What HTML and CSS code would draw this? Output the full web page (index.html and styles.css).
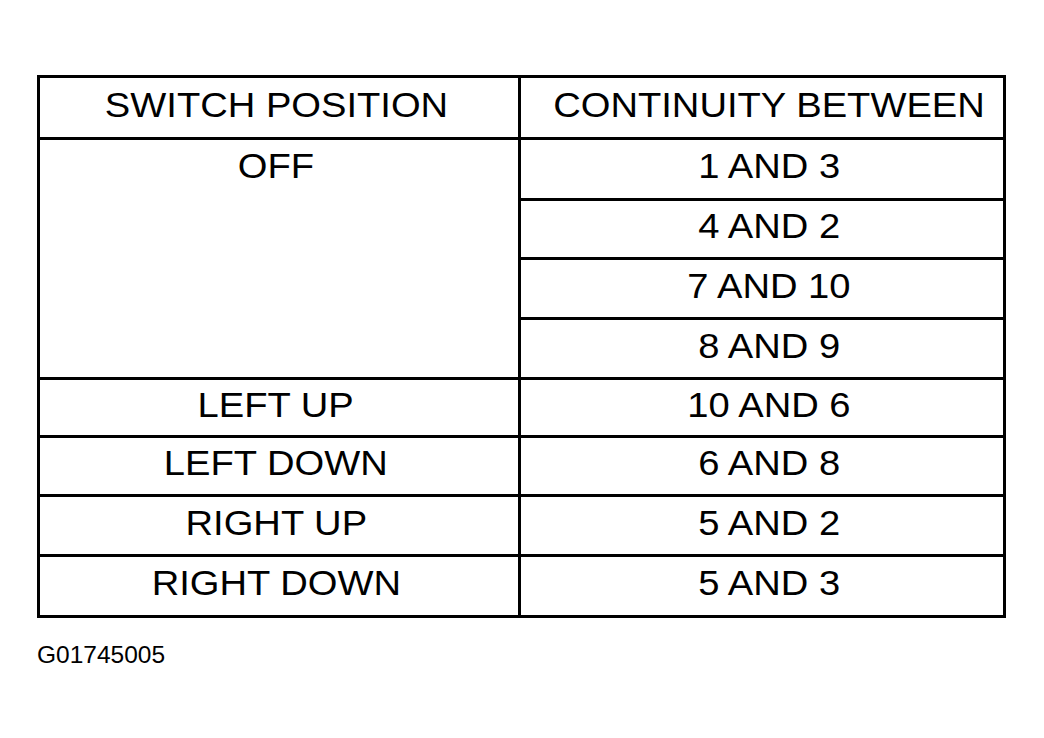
FILE: index.html
```html
<!DOCTYPE html>
<html>
<head>
<meta charset="utf-8">
<link rel="stylesheet" href="styles.css">
</head>
<body>
<div class="page">
  <div class="table">
    <div class="cell left"><span class="t">SWITCH POSITION</span></div>
    <div class="cell right"><span class="t">CONTINUITY BETWEEN</span></div>
    <div class="cell left off"><span class="t">OFF</span></div>
    <div class="cell right"><span class="t">1 AND 3</span></div>
    <div class="cell right"><span class="t">4 AND 2</span></div>
    <div class="cell right"><span class="t">7 AND 10</span></div>
    <div class="cell right"><span class="t">8 AND 9</span></div>
    <div class="cell left"><span class="t">LEFT UP</span></div>
    <div class="cell right"><span class="t">10 AND 6</span></div>
    <div class="cell left"><span class="t">LEFT DOWN</span></div>
    <div class="cell right"><span class="t">6 AND 8</span></div>
    <div class="cell left"><span class="t">RIGHT UP</span></div>
    <div class="cell right"><span class="t">5 AND 2</span></div>
    <div class="cell left"><span class="t">RIGHT DOWN</span></div>
    <div class="cell right"><span class="t">5 AND 3</span></div>
  </div>
  <div class="code">G01745005</div>
</div>
</body>
</html>
```

FILE: styles.css
```css
html, body {
  margin: 0;
  padding: 0;
  background: #ffffff;
}
body {
  font-family: "Liberation Sans", Arial, sans-serif;
  color: #000;
}
.page {
  padding: 75px 0 0 37px;
}
.table {
  display: grid;
  width: 963px;
  grid-template-columns: 478px 482px;
  grid-template-rows: 59px 58px 56px 57px 57px 55px 56px 57px 58px;
  gap: 3px;
  padding: 3px;
  background: #000;
}
.cell {
  background: #fff;
  display: flex;
  align-items: center;
  justify-content: center;
  padding-bottom: 6px;
  box-sizing: border-box;
}
.left {
  grid-column: 1;
  padding-right: 6px;
}
.right {
  grid-column: 2;
  padding-left: 14px;
}
.off {
  grid-row: 2 / span 4;
  align-items: flex-start;
  padding-top: 6px;
  padding-bottom: 0;
}
.t {
  display: inline-block;
  font-size: 35px;
  line-height: 40px;
  white-space: nowrap;
  transform: scaleX(1.09);
}
.code {
  margin-top: 23px;
  font-size: 24.5px;
  line-height: 28px;
}
```
